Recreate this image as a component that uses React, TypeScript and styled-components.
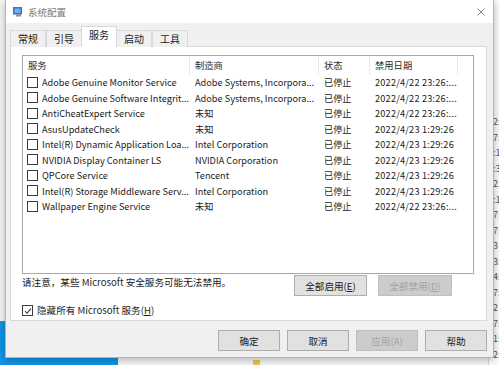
import styled, { createGlobalStyle } from 'styled-components';

const GlobalStyle = createGlobalStyle`
  html, body {
    margin: 0;
    padding: 0;
  }
  body {
    width: 499px;
    height: 365px;
    overflow: hidden;
    background: #f6f6f6;
    font-family: "Noto Sans CJK SC", "Noto Sans", sans-serif;
  }
`;

const Desktop = styled.div`
  position: relative;
  width: 499px;
  height: 365px;
  overflow: hidden;
  background: #f7f7f7;
`;

const TopAccent = styled.div`
  position: absolute;
  top: 0;
  left: 283px;
  right: 0;
  height: 2px;
  background: #1a8ad8;
`;

const BlueCorner = styled.div`
  position: absolute;
  left: 0;
  bottom: 0;
  width: 118px;
  height: 44px;
  background: #1195e6;
`;

const FolderIcon = styled.div`
  position: absolute;
  left: 253px;
  top: 360px;
  width: 7px;
  height: 5px;
  background: #f3c443;
`;

const BackWindow = styled.div`
  position: absolute;
  left: 488px;
  top: 0;
  width: 11px;
  height: 365px;
  overflow: hidden;
  background: #fbfbfb;
  border-left: 1px solid #d6d6d6;
  display: flex;
  flex-direction: column;
  padding-top: 114px;
  box-sizing: border-box;
`;

const BackLine = styled.div`
  height: 15.5px;
  line-height: 15.5px;
  font-size: 9px;
  color: #555;
  padding-left: 4px;
  white-space: nowrap;
`;

const Dialog = styled.div`
  position: absolute;
  left: 5px;
  top: 0;
  width: 489px;
  height: 358px;
  box-sizing: border-box;
  border: 1px solid #b4b4b4;
  border-top: none;
  background: #f0f0f0;
  box-shadow: 0 2px 8px rgba(0, 0, 0, 0.28);
  display: flex;
  flex-direction: column;
  color: #1b1b1b;
  font-size: 10px;
`;

const TitleBar = styled.div`
  height: 23px;
  background: #ffffff;
  display: flex;
  align-items: center;
  padding: 0 8px 0 7px;
`;

const TitleText = styled.span`
  margin-left: 5px;
  font-size: 9.5px;
  color: #7a7a7a;
  flex: 1;
`;

const Body = styled.div`
  flex: 1;
  display: flex;
  flex-direction: column;
  padding: 0 6px 0 4px;
`;

const TabStrip = styled.div`
  height: 24px;
  display: flex;
  align-items: flex-end;
  position: relative;
  z-index: 1;
  margin-bottom: -1px;
`;

const Tab = styled.div<{ $active?: boolean }>`
  height: ${(p) => (p.$active ? '19px' : '16px')};
  line-height: 16px;
  padding: 0 7px;
  margin: 0 ${(p) => (p.$active ? '-1px' : '0')};
  border: 1px solid #d9d9d9;
  border-bottom: ${(p) => (p.$active ? '1px solid #ffffff' : 'none')};
  background: ${(p) => (p.$active ? '#ffffff' : '#f0f0f0')};
  font-size: 10px;
  color: #1b1b1b;
  & + & {
    border-left: ${(p) => (p.$active ? '1px solid #d9d9d9' : 'none')};
  }
`;

const Panel = styled.div`
  height: 275px;
  box-sizing: border-box;
  background: #ffffff;
  border: 1px solid #d9d9d9;
  padding: 8px 12px 0 11px;
  display: flex;
  flex-direction: column;
`;

const ListBox = styled.div`
  height: 219px;
  box-sizing: border-box;
  border: 1px solid #a8a8a8;
  display: flex;
  flex-direction: column;
`;

const Columns = styled.div<{ $header?: boolean }>`
  display: grid;
  grid-template-columns: 167px 129px 51px 88px 1fr;
  height: ${(p) => (p.$header ? '18.5px' : '15.5px')};
  align-items: center;
  color: ${(p) => (p.$header ? '#2b2b2b' : '#1b1b1b')};
`;

const HeadCell = styled.div`
  height: 100%;
  display: flex;
  align-items: center;
  padding-left: 5px;
  border-right: 1px solid #e8e8e8;
  font-size: 9.3px;
  &:last-child {
    border-right: none;
  }
`;

const Cell = styled.div`
  display: flex;
  align-items: center;
  padding-left: 5px;
  white-space: nowrap;
  overflow: hidden;
  font-size: 9.2px;
`;

const NameCell = styled(Cell)`
  padding-left: 4px;
`;

const DateCell = styled(Cell)`
  letter-spacing: 0.2px;
`;

const Box = styled.span`
  width: 9px;
  height: 9px;
  flex: none;
  border: 1px solid #3c3c3c;
  background: #ffffff;
  margin-right: 4px;
  display: inline-flex;
  align-items: center;
  justify-content: center;
`;

const NoticeRow = styled.div`
  display: flex;
  align-items: flex-start;
  margin-top: 1px;
  padding-right: 22px;
`;

const Notice = styled.span`
  flex: 1;
  padding-top: 1px;
  line-height: 13px;
  font-size: 9.6px;
`;

const Button = styled.button<{ $w?: number }>`
  width: ${(p) => p.$w ?? 62}px;
  height: 21px;
  box-sizing: border-box;
  padding: 0;
  border: 1px solid #adadad;
  background: #e1e1e1;
  font-family: "Noto Sans CJK SC", "Noto Sans", sans-serif;
  font-size: 9.6px;
  color: #1b1b1b;
  &:disabled {
    background: #cccccc;
    border-color: #bfbfbf;
    color: #a3a3a3;
  }
  & + & {
    margin-left: 11px;
  }
`;

const HideRow = styled.label`
  display: flex;
  align-items: center;
  margin-top: 8px;
  font-size: 9.6px;
  line-height: 13px;
`;

const Footer = styled.div`
  flex: 1;
  display: flex;
  justify-content: flex-end;
  align-items: flex-start;
  padding-top: 9px;
  gap: 7px;
`;

const FooterButton = styled(Button)`
  & + & {
    margin-left: 0;
  }
`;

const Key = styled.span`
  text-decoration: underline;
`;

function AppIcon() {
  return (
    <svg width="10" height="10" viewBox="0 0 10 10">
      <rect x="0.5" y="0.5" width="8" height="6.5" fill="#2e6fc9" stroke="#5b6f8a" strokeWidth="1" />
      <rect x="1.5" y="1.5" width="6" height="4.5" fill="#6fb0f0" />
      <rect x="3" y="7.5" width="5" height="2" fill="#8a8f99" />
    </svg>
  );
}

function CloseIcon() {
  return (
    <svg width="8" height="8" viewBox="0 0 8 8">
      <path d="M0.5 0.5 L7.5 7.5 M7.5 0.5 L0.5 7.5" stroke="#8a8a8a" strokeWidth="1" />
    </svg>
  );
}

function Check() {
  return (
    <svg width="8" height="8" viewBox="0 0 8 8">
      <path d="M1 4.2 L3.1 6.3 L7 1.6" fill="none" stroke="#333" strokeWidth="1.1" />
    </svg>
  );
}

const services = [
  { name: 'Adobe Genuine Monitor Service', maker: 'Adobe Systems, Incorpora...', date: '2022/4/22 23:26:...' },
  { name: 'Adobe Genuine Software Integrit...', maker: 'Adobe Systems, Incorpora...', date: '2022/4/22 23:26:...' },
  { name: 'AntiCheatExpert Service', maker: '未知', date: '2022/4/22 23:26:...' },
  { name: 'AsusUpdateCheck', maker: '未知', date: '2022/4/23 1:29:26' },
  { name: 'Intel(R) Dynamic Application Loa...', maker: 'Intel Corporation', date: '2022/4/23 1:29:26' },
  { name: 'NVIDIA Display Container LS', maker: 'NVIDIA Corporation', date: '2022/4/23 1:29:26' },
  { name: 'QPCore Service', maker: 'Tencent', date: '2022/4/23 1:29:26' },
  { name: 'Intel(R) Storage Middleware Serv...', maker: 'Intel Corporation', date: '2022/4/23 1:29:26' },
  { name: 'Wallpaper Engine Service', maker: '未知', date: '2022/4/22 23:26:...' },
];

const backText = ['2:', '7:', ':1', ':3', '2:', ':1', '7:', '7:', '3', '3:', '4:', '7:', '2', '7:', '1:', '2:'];

export default function App() {
  return (
    <Desktop>
      <GlobalStyle />
      <TopAccent />
      <BlueCorner />
      <FolderIcon />
      <BackWindow>
        {backText.map((t, i) => (
          <BackLine key={i}>{t}</BackLine>
        ))}
      </BackWindow>

      <Dialog>
        <TitleBar>
          <AppIcon />
          <TitleText>系统配置</TitleText>
          <CloseIcon />
        </TitleBar>

        <Body>
          <TabStrip>
            <Tab>常规</Tab>
            <Tab>引导</Tab>
            <Tab $active>服务</Tab>
            <Tab>启动</Tab>
            <Tab>工具</Tab>
          </TabStrip>

          <Panel>
            <ListBox>
              <Columns $header>
                <HeadCell>服务</HeadCell>
                <HeadCell>制造商</HeadCell>
                <HeadCell>状态</HeadCell>
                <HeadCell>禁用日期</HeadCell>
                <HeadCell />
              </Columns>
              {services.map((s, i) => (
                <Columns key={i}>
                  <NameCell>
                    <Box />
                    {s.name}
                  </NameCell>
                  <Cell>{s.maker}</Cell>
                  <Cell>已停止</Cell>
                  <DateCell>{s.date}</DateCell>
                  <Cell />
                </Columns>
              ))}
            </ListBox>

            <NoticeRow>
              <Notice>请注意，某些 Microsoft 安全服务可能无法禁用。</Notice>
              <Button $w={73}>
                全部启用(<Key>E</Key>)
              </Button>
              <Button $w={74} disabled>
                全部禁用(<Key>D</Key>)
              </Button>
            </NoticeRow>

            <HideRow>
              <Box>
                <Check />
              </Box>
              隐藏所有 Microsoft 服务(<Key>H</Key>)
            </HideRow>
          </Panel>

          <Footer>
            <FooterButton>确定</FooterButton>
            <FooterButton>取消</FooterButton>
            <FooterButton disabled>应用(A)</FooterButton>
            <FooterButton>帮助</FooterButton>
          </Footer>
        </Body>
      </Dialog>
    </Desktop>
  );
}
